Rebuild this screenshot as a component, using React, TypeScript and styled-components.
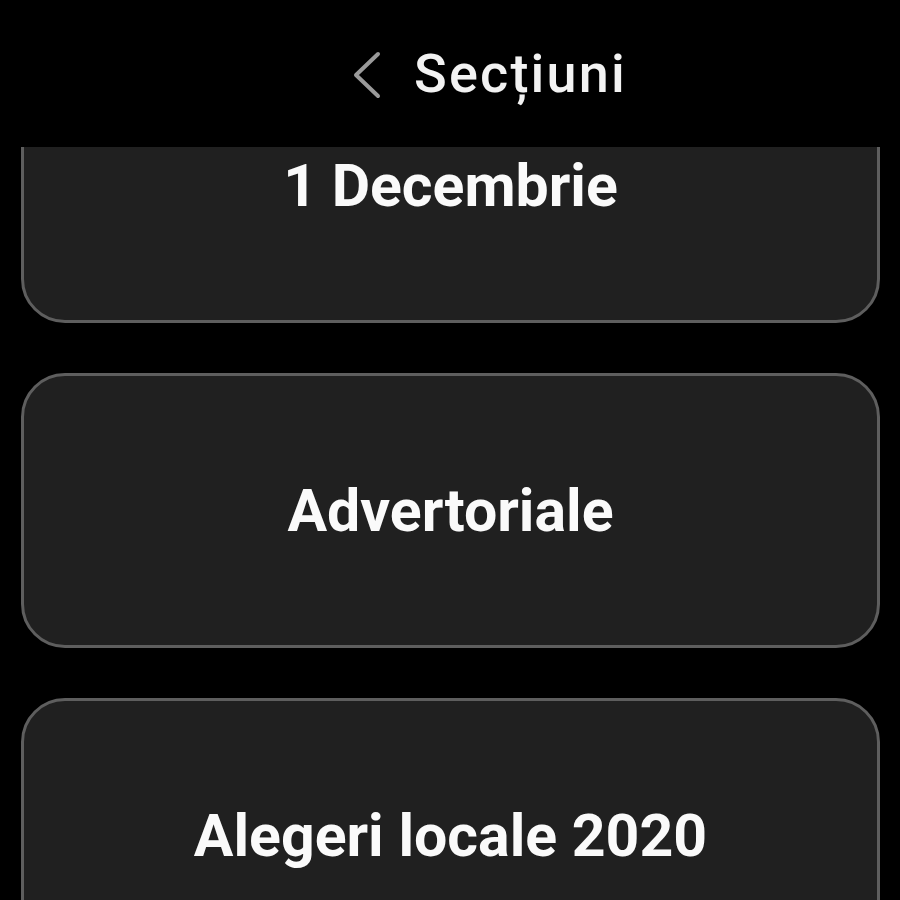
import React from "react";
import styled, { createGlobalStyle } from "styled-components";

const Global = createGlobalStyle`
  html, body { margin: 0; padding: 0; background: #000; }
  body { font-family: Roboto, "Noto Sans", "Liberation Sans", sans-serif; }
  #root { height: 900px; }
`;

const Screen = styled.div`
  position: relative;
  width: 900px;
  height: 900px;
  overflow: hidden;
  background: #000;
`;

const Header = styled.header`
  position: absolute;
  top: 0;
  left: 0;
  right: 0;
  height: 147px;
  background: #000;
  z-index: 2;
  display: flex;
  align-items: center;
  justify-content: center;
  gap: 33px;
  padding-left: 78px;
  box-sizing: border-box;
`;

const BackButton = styled.button`
  background: none;
  border: none;
  padding: 0;
  display: flex;
  align-items: center;
  cursor: pointer;
  margin-top: 2px;
`;

const Title = styled.h1`
  margin: 0;
  color: #f2f2f2;
  font-size: 54px;
  font-weight: 500;
  letter-spacing: 2.2px;
`;

const List = styled.div`
  display: flex;
  flex-direction: column;
  gap: 50px;
  padding: 48px 20px 0 21px;
`;

const Card = styled.div`
  box-sizing: border-box;
  height: 275px;
  background: #202020;
  border: 3px solid #5e5e5e;
  border-radius: 44px;
  display: flex;
  align-items: center;
  justify-content: center;
  color: #fafafa;
  font-size: 59px;
  font-weight: 700;
`;

const sections = ["1 Decembrie", "Advertoriale", "Alegeri locale 2020"];

export default function App() {
  return (
    <Screen>
      <Global />
      <Header>
        <BackButton aria-label="Înapoi">
          <svg width="30" height="48" viewBox="0 0 30 48">
            <polyline
              points="27,3 5,24 27,45"
              fill="none"
              stroke="#9a9a9a"
              strokeWidth="4"
              strokeLinecap="round"
              strokeLinejoin="round"
            />
          </svg>
        </BackButton>
        <Title>Secțiuni</Title>
      </Header>
      <List>
        {sections.map((s) => (
          <Card key={s}>{s}</Card>
        ))}
      </List>
    </Screen>
  );
}
